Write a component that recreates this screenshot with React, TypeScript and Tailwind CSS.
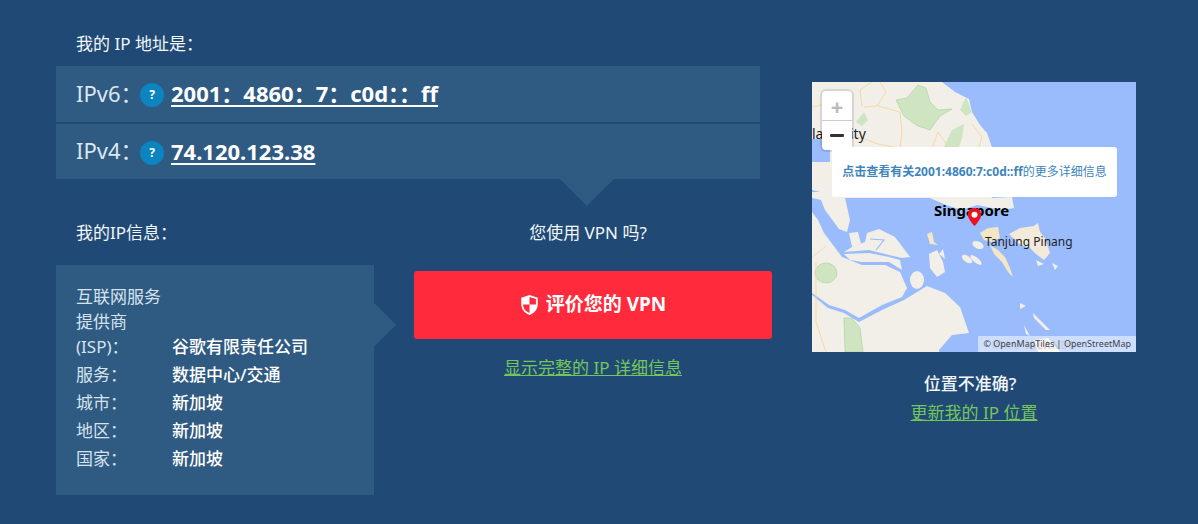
const font = { fontFamily: '"Noto Sans","Open Sans","Noto Sans CJK SC",sans-serif' };

function Help() {
  return (
    <span className="mt-[2px] flex h-[24px] w-[24px] shrink-0 items-center justify-center rounded-full bg-[#0b84bf] text-[12px] font-bold text-white">?</span>
  );
}

function IpRow({ label, ip, h }: { label: string; ip: string; h: string }) {
  return (
    <div className={`flex items-center bg-[#2f5a82] pl-[20px] ${h}`}>
      <span className="w-[64px] pb-[2px] text-[22px] whitespace-nowrap text-[#dbe7f0]">{label}</span>
      <Help />
      <a className="mb-[2px] ml-[7px] text-[22px] leading-[28px] font-bold text-white underline underline-offset-[3px]">{ip}</a>
    </div>
  );
}

function Info({ label, value, h }: { label: React.ReactNode; value: string; h: string }) {
  return (
    <div className={`flex items-end ${h}`}>
      <span className="w-[96px] shrink-0 text-[#d5e3ee]">{label}</span>
      <span className="font-medium text-white">{value}</span>
    </div>
  );
}

function MapArt() {
  const land = "#f1efe8";
  const water = "#9abcfd";
  const forest = "#cfe5c2";
  const road = "#f6d9a6";
  return (
    <svg viewBox="0 0 324 270" className="block h-[270px] w-[324px] blur-[0.4px]">
      <rect width="324" height="270" fill={water} />
      {/* peninsula */}
      <path d="M0 0H130L143 10L157 17L160 30L168 43L175 51L181 68L185 90L180 116L200 115L202 126L190 128L165 123L150 128L134 123L118 116H33L0 108Z" fill={land} />
      <path d="M0 57H18V80H0Z" fill={water} />
      {/* forests */}
      <path d="M84 18L95 16L106 3L114 6L118 20L126 28L140 27L128 34L118 48L106 44L100 40L92 34L88 26Z" fill={forest} stroke="#a9cf9d" strokeWidth="0.6" />
      <path d="M132 65L140 48L152 42L150 56L146 68Z" fill={forest} />
      <path d="M44 40L52 30L56 38L50 44Z" fill={forest} />
      <path d="M148 28L154 15L160 30L154 34Z" fill={forest} />
      {/* roads */}
      <g fill="none" stroke={road} strokeWidth="1">
        <path d="M52 25L65 24L74 10L68 0" />
        <path d="M66 24L88 30L90 50L88 66" />
        <path d="M30 54L50 56L66 62L82 65" />
        <path d="M140 70L126 50L120 66" />
        <path d="M160 42L170 55L166 68" />
        <path d="M50 24L48 8L60 0" />
        <path d="M0 25L14 22L20 35" />
      </g>
      {/* northern Sumatra strip */}
      <path d="M0 110H20L33 116L38 138L35 150L27 147L13 128L9 118L0 116Z" fill={land} />
      {/* main Sumatra upper */}
      <path d="M0 130L6 138L12 151L30 175L50 183L73 183L88 190L95 206L90 215L70 223L47 236L33 228L17 223L0 211Z" fill={land} />
      {/* main Sumatra lower */}
      <path d="M0 213L16 226L32 231L47 240L70 228L92 218L115 204L133 211L148 225L157 251L140 253L127 268V270H0Z" fill={land} />
      {/* middle islands */}
      <path d="M55 151L67 147L83 155L98 175L90 176L77 173L57 168L32 170L40 165L53 160Z" fill={land} />
      <path d="M32 172L57 171L77 175L88 178L90 188L77 180L50 180L38 178Z" fill={land} />
      <path d="M37 151L46 150L49 162L40 165Z" fill={land} />
      <ellipse cx="105" cy="198" rx="7" ry="9" fill={land} />
      <path d="M58 157L72 158L64 168" fill="none" stroke={water} strokeWidth="1.2" />
      {/* forests south */}
      <ellipse cx="14" cy="191" rx="11" ry="10" fill={forest} stroke="#a9cf9d" strokeWidth="0.6" />
      <path d="M32 236L40 236L48 246L51 270H33Z" fill={forest} stroke="#a9cf9d" strokeWidth="0.6" />
      <path d="M0 175L14 164" fill="none" stroke={road} strokeWidth="1" />
      <path d="M4 180L4 240L14 270" fill="none" stroke={road} strokeWidth="1" />
      {/* small islands */}
      <path d="M115 152L120 150L122 160L126 163L118 162Z" fill="#f5e6c5" />
      <path d="M117 172L125 168L131 180L133 190L125 195L118 186Z" fill={land} />
      <path d="M127 172L131 167L133 177Z" fill={land} />
      <ellipse cx="155" cy="177" rx="6" ry="3" transform="rotate(35 155 177)" fill={land} />
      <ellipse cx="164" cy="178" rx="7" ry="2.500" transform="rotate(40 164 178)" fill={land} />
      <ellipse cx="166" cy="163" rx="6" ry="3.500" transform="rotate(25 166 163)" fill={land} />
      <path d="M168 151L176 146L186 145L188 156L180 160L172 158Z" fill="#f3e6c6" />
      <path d="M178 163L186 168L193 175L198 186L201 195L196 190L190 180L182 172Z" fill="#f3e6c6" />
      <path d="M197 152L208 146L222 144L226 141L228 150L233 156L238 171L232 178L224 172L218 166L207 162Z" fill="#f3eadb" />
      <path d="M208 221L214 224L208 227Z M221 231L238 248L234 248L222 236Z M212 243L218 254L214 252Z" fill={land} />
      <path d="M240 181L246 184L243 188Z M224 178L232 182L226 184Z" fill={land} />
      <path d="M222 258L236 256L248 270H226Z" fill={land} />
    </svg>
  );
}

export default function App() {
  return (
    <div style={font} className="flex h-[524px] w-[1198px] items-start bg-[#204a75] pl-[56px] text-[17px] text-white">
      <div className="w-[716px]">
        <div className="h-[66px] pt-[32px] pl-[20px] leading-[24px] text-[#f2f6f9]">我的 IP 地址是：</div>
        <div className="relative w-[704px]">
          <div className="flex flex-col gap-[2px]">
            <IpRow label="IPv6：" ip="2001：4860：7：c0d：：ff" h="h-[56px]" />
            <IpRow label="IPv4：" ip="74.120.123.38" h="h-[55px]" />
          </div>
          <div className="absolute top-full left-[504px] h-0 w-0 border-x-[27px] border-t-[27px] border-x-transparent border-t-[#2f5a82]" />
        </div>
        <div className="mt-[42px] flex items-start">
          <div className="w-[318px]">
            <div className="pl-[20px] leading-[24px] text-[#f2f6f9]">我的IP信息：</div>
            <div className="relative mt-[20px] h-[230px] bg-[#2f5a82] pt-[20px] pl-[20px]">
              <div className="absolute top-[38px] left-full h-0 w-0 border-y-[22px] border-l-[22px] border-y-transparent border-l-[#2f5a82]" />
              <Info h="h-[74px]" label={<span className="block leading-[25px]">互联网服务<br />提供商<br />(ISP)：</span>} value="谷歌有限责任公司" />
              <Info h="h-[28px]" label="服务：" value="数据中心/交通" />
              <Info h="h-[28px]" label="城市：" value="新加坡" />
              <Info h="h-[28px]" label="地区：" value="新加坡" />
              <Info h="h-[28px]" label="国家：" value="新加坡" />
            </div>
          </div>
          <div className="ml-[40px] flex w-[358px] flex-col items-center">
            <div className="pr-[10px] leading-[24px] text-[#f2f6f9]">您使用 VPN 吗?</div>
            <button className="mt-[26px] flex h-[68px] w-full items-center justify-center gap-[7px] rounded-[3px] bg-[#ff2a3c] pb-[2px] text-[19px] font-bold text-white">
              <svg viewBox="0 0 20 24" className="mt-[2px] h-[22px] w-[19px]">
                <path d="M10 1L19 4V11C19 17 15 21 10 23C5 21 1 17 1 11V4Z" fill="#fff" />
                <path d="M10 3.200L17 5.500V11.500H10ZM10 11.500V20.800C6 19 3 16 3 11.500Z" fill="#ff2a3c" />
              </svg>
              评价您的 VPN
            </button>
            <a className="mt-[17px] leading-[24px] text-[#75c65a] underline">显示完整的 IP 详细信息</a>
          </div>
        </div>
      </div>
      <div className="mt-[82px] ml-[40px] flex w-[324px] flex-col items-center">
        <div className="relative h-[270px] w-[324px] overflow-hidden">
          <MapArt />
          <span className="absolute top-[43px] left-0 text-[14px] leading-[18px] text-[#222]">la</span>
          <span className="absolute top-[43px] left-[38px] text-[14px] leading-[18px] text-[#222]">ity</span>
          <span className="absolute top-[118px] left-[122px] text-[15px] leading-[20px] font-bold text-black">Singapore</span>
          <span className="absolute top-[152px] left-[173px] text-[12px] leading-[16px] text-[#222]">Tanjung Pinang</span>
          <div className="absolute top-[9px] left-[10px] flex w-[30px] flex-col overflow-hidden rounded-[4px] bg-white shadow-[0_0_0_2px_rgba(0,0,0,0.1)]">
            <span className="flex h-[30px] items-center justify-center border-b border-[#ccc] text-[22px] leading-[24px] font-bold text-[#bbb]">+</span>
            <span className="flex h-[29px] items-center justify-center">
              <span className="block h-[3px] w-[14px] rounded-[1px] bg-[#333]" />
            </span>
          </div>
          <div className="absolute top-[65px] left-[20px] flex h-[50px] w-[285px] items-center justify-center rounded-[3px] bg-white text-[12px] whitespace-nowrap text-[#3e85bb]">
            <b>点击查看有关2001:4860:7:c0d::ff</b>的更多详细信息
          </div>
          <svg viewBox="0 0 20 26" className="absolute top-[125px] left-[155px] h-[20px] w-[15px]">
            <path d="M10 1C4.500 1 1 5 1 10C1 16 10 25 10 25C10 25 19 16 19 10C19 5 15.500 1 10 1Z" fill="#e9141f" />
            <circle cx="10" cy="10" r="4" fill="#fff" />
          </svg>
          <span className="absolute top-[257px] left-[180px] text-[10px] leading-[12px] tracking-[1.500px] text-[#7f8da8]">RIAU ISLANDS</span>
          <div className="absolute right-0 bottom-0 bg-white/50 px-[5px] text-[9px] leading-[16px] text-[#444]">© OpenMapTiles | OpenStreetMap</div>
        </div>
        <div className="mt-[20px] pr-[8px] leading-[24px] font-medium text-[#f2f6f9]">位置不准确?</div>
        <a className="mt-[5px] leading-[24px] text-[#75c65a] underline">更新我的 IP 位置</a>
      </div>
    </div>
  );
}
